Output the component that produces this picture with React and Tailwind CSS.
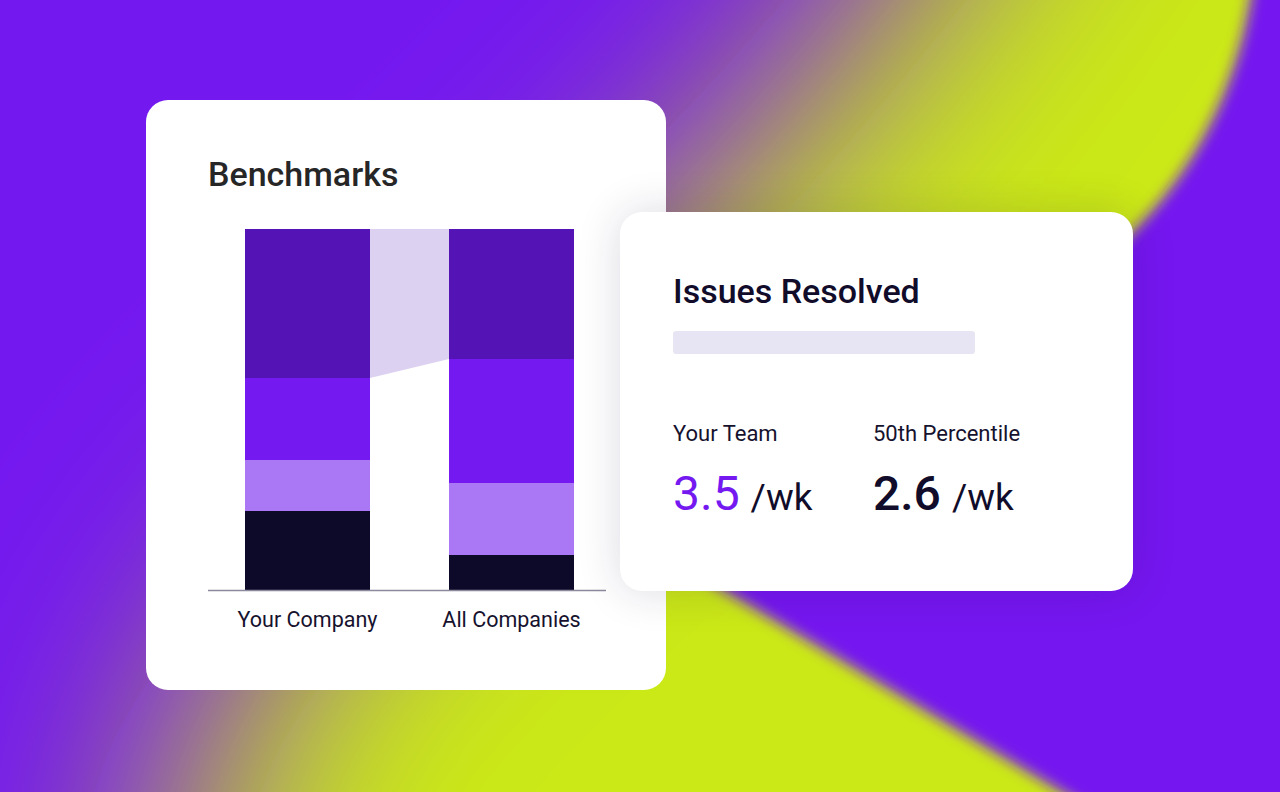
import React from "react";

const Backdrop = () => (
  <svg width="1280" height="792" viewBox="0 0 1280 792" className="col-start-1 row-start-1 block">
    <defs>
      <filter id="soft" filterUnits="userSpaceOnUse" x="-900" y="-900" width="3200" height="2800">
        <feGaussianBlur stdDeviation="125" />
      </filter>
      <filter id="edge" filterUnits="userSpaceOnUse" x="-600" y="-600" width="2600" height="2200">
        <feGaussianBlur stdDeviation="7" />
      </filter>
    </defs>
    <rect width="1280" height="792" fill="#7418f0" />
    <path d="M150 1400 L175 800 C230 560 690 300 990 -150 L1250 -550 L2100 -550 L2100 1400 Z" fill="#cbe912" filter="url(#soft)" />
    <path d="M1257 -60 C1250 70 1200 165 1130 235 C1000 365 800 480 695 573 L1125 830 L1500 830 L1500 -60 Z" fill="#7418f0" filter="url(#edge)" />
  </svg>
);

const BarChart = () => (
  <svg width="398" height="363" viewBox="0 0 398 363" className="block">
    <polygon points="162,0 241,0 241,130 162,149" fill="#ddd1f1" />
    <rect x="37" y="0" width="125" height="149" fill="#5313b5" />
    <rect x="37" y="149" width="125" height="82" fill="#7419f0" />
    <rect x="37" y="231" width="125" height="51" fill="#aa78f5" />
    <rect x="37" y="282" width="125" height="79" fill="#0d0a29" />
    <rect x="241" y="0" width="125" height="130" fill="#5313b5" />
    <rect x="241" y="130" width="125" height="124" fill="#7419f0" />
    <rect x="241" y="254" width="125" height="72" fill="#aa78f5" />
    <rect x="241" y="326" width="125" height="35" fill="#0d0a29" />
    <line x1="0" y1="361.5" x2="398" y2="361.5" stroke="#8c8a9c" strokeWidth="1.5" />
  </svg>
);

const BenchmarksCard = () => (
  <div className="w-[520px] h-[590px] shrink-0 rounded-[22px] bg-white px-[62px] pt-[54px]">
    <h2 className="text-[34px] leading-[40px] font-medium text-[#262626]">Benchmarks</h2>
    <div className="mt-[35px]">
      <BarChart />
    </div>
    <div className="mt-[14px] ml-[37px] flex gap-[79px] text-[21.5px] leading-[28px] text-[#16122e]">
      <span className="w-[125px] flex justify-center whitespace-nowrap">Your Company</span>
      <span className="w-[125px] flex justify-center whitespace-nowrap">All Companies</span>
    </div>
  </div>
);

const IssuesCard = () => (
  <div className="relative z-10 -ml-[46px] mt-[112px] w-[513px] h-[379px] shrink-0 rounded-[22px] bg-white pl-[53px] pt-[59px] shadow-[0_0_44px_rgba(30,20,70,0.16)]">
    <h2 className="text-[34px] leading-[40px] font-medium text-[#100c2a]">Issues Resolved</h2>
    <div className="mt-[20px] w-[302px] h-[23px] rounded-[3px] bg-[#e7e4f3]" />
    <div className="mt-[66px] flex text-[22px] leading-[28px] text-[#16122e]">
      <span className="w-[200px]">Your Team</span>
      <span>50th Percentile</span>
    </div>
    <div className="mt-[22px] flex">
      <div className="w-[200px] flex items-baseline">
        <span className="text-[48px] leading-none text-[#7419f0]">3.5</span>
        <span className="ml-[11px] text-[37px] leading-none text-[#100c2a]">/wk</span>
      </div>
      <div className="flex items-baseline">
        <span className="text-[48px] leading-none font-medium text-[#100c2a]">2.6</span>
        <span className="ml-[11px] text-[37px] leading-none text-[#100c2a]">/wk</span>
      </div>
    </div>
  </div>
);

export default function App() {
  return (
    <div className="grid w-[1280px] h-[792px] overflow-hidden font-['Roboto',sans-serif]">
      <Backdrop />
      <div className="col-start-1 row-start-1 flex items-start pl-[146px] pt-[100px]">
        <BenchmarksCard />
        <IssuesCard />
      </div>
    </div>
  );
}
